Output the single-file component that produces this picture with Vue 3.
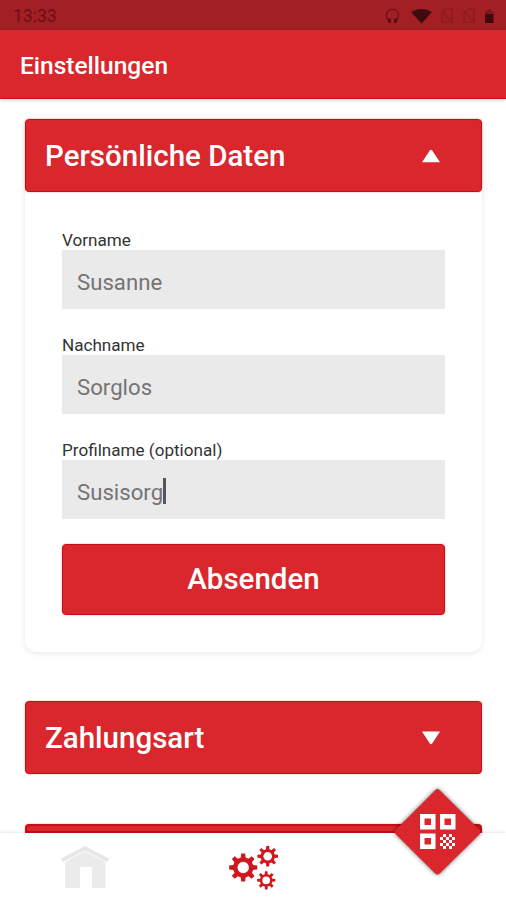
<script setup>
import { ref } from 'vue'

const fields = ref([
  { label: 'Vorname', value: 'Susanne', active: false },
  { label: 'Nachname', value: 'Sorglos', active: false },
  { label: 'Profilname (optional)', value: 'Susisorg', active: true }
])

// Closed outline of an eight-toothed gear, followed by its round hole.
function gear(cx, cy, outer, root, hole) {
  const pts = []
  for (let i = 0; i < 8; i++) {
    const a = (i * Math.PI) / 4
    const steps = [[-0.24, root], [-0.14, outer], [0.14, outer], [0.24, root]]
    for (const [d, r] of steps) {
      pts.push(`${(cx + r * Math.cos(a + d)).toFixed(2)} ${(cy + r * Math.sin(a + d)).toFixed(2)}`)
    }
  }
  return `M${pts.join('L')}ZM${cx - hole} ${cy}a${hole} ${hole} 0 1 0 ${hole * 2} 0a${hole} ${hole} 0 1 0 ${-hole * 2} 0Z`
}

const gears = [
  gear(15.2, 21.5, 14.2, 10.2, 5.7),
  gear(39.7, 10.3, 10.4, 7.2, 4.3),
  gear(38.2, 34.3, 9.2, 6.3, 3.9)
]
</script>

<template>
  <div class="screen">
    <div class="status">
      <span class="time">13:33</span>
      <svg class="status-icons" width="112" height="18" viewBox="0 0 112 18">
        <g fill="none" stroke="#74121a" stroke-width="1.5">
          <path d="M4.500 13.500C1 9 2 2.500 8.500 2.500S16 9 12.500 13.500" />
          <path d="M5.500 11.500v4.500M11.500 11.500v4.500" stroke="#5e0d14" stroke-width="3" />
        </g>
        <path d="M27 5Q37.500-1 48 5L37.500 16.500Z" fill="#400a0e" />
        <g fill="none" stroke="#901a21" stroke-width="1.500">
          <path d="M58 15V6l4-4h6v13ZM58 4l10 11" />
          <path d="M80 15V6l4-4h6v13ZM80 4l10 11" />
        </g>
        <path d="M101 4h2.500V2h3.500v2h2.500v4h-8.500Z" fill="#80151b" />
        <path d="M101 7h8.500v9H101Z" fill="#40090d" />
      </svg>
    </div>
    <header class="header">Einstellungen</header>

    <main class="content">
      <section class="card">
        <div class="bar">
          <span>Persönliche Daten</span>
          <svg width="20" height="14" viewBox="0 0 20 14"><path d="M1 13.300L8.800 1.500Q10 .2 11.200 1.500L19 13.300Z" fill="#fff" /></svg>
        </div>
        <form class="form" @submit.prevent>
          <div v-for="f in fields" :key="f.label" class="field">
            <label class="label">{{ f.label }}</label>
            <div class="input"><span>{{ f.value }}</span><i v-if="f.active" class="caret"></i></div>
          </div>
          <button class="submit" type="submit">Absenden</button>
        </form>
      </section>
      <div class="bar">
        <span>Zahlungsart</span>
        <svg width="20" height="14" viewBox="0 0 20 14"><path d="M1 .5H19L11.200 12.500Q10 13.800 8.800 12.500Z" fill="#fff" /></svg>
      </div>
      <div class="bar next"></div>
    </main>

    <nav class="nav">
      <svg class="home" width="48" height="43" viewBox="0 0 48 43">
        <path d="M0 12.500L24 0L48 12.500L46 16L24 4.500L2 16Z" fill="#e7e7e7" />
        <path d="M4 16L24 5.500L44.500 16V42H31V21H19V42H4Z" fill="#ebebeb" />
      </svg>
      <svg class="gears" width="52" height="46" viewBox="0 0 52 46">
        <path v-for="(d, i) in gears" :key="i" :d="d" fill="#d1161d" fill-rule="evenodd" />
      </svg>
    </nav>

    <svg class="fab" width="98" height="98" viewBox="0 0 98 98">
      <path d="M46.300 7.200Q48.500 5 50.700 7.200L90.500 46.800Q92.700 49 90.500 51.200L50.700 90.500Q48.500 92.700 46.300 90.500L6.800 51.200Q4.600 49 6.800 46.800Z" fill="#d9272d" />
      <path d="M31 31h15.500v15.500H31ZM35.500 35.500v6.500h6.500v-6.500ZM51 31h15.500v15.500H51ZM55.500 35.500v6.500h6.500v-6.500ZM31 50.500h15.500V66H31ZM35.500 55v6.500h6.500V55Z" fill="#fff" fill-rule="evenodd" />
      <path d="M54 51h3v3h-3ZM60 51h3v3h-3ZM51 54h3v3h-3ZM57 54h3v3h-3ZM63 54h3v3h-3ZM54 57h3v3h-3ZM60 57h3v3h-3ZM51 60h3v3h-3ZM57 60h3v3h-3ZM63 60h3v3h-3ZM54 63h3v3h-3ZM60 63h3v3h-3Z" fill="#fff" />
    </svg>
  </div>
</template>

<style>
body { margin: 0; background: #fff; }
</style>

<style scoped>
.screen {
  position: relative;
  display: flex;
  flex-direction: column;
  width: 506px;
  height: 900px;
  overflow: hidden;
  background: #fff;
  font-family: Roboto, sans-serif;
}
.status {
  display: flex;
  align-items: center;
  justify-content: space-between;
  box-sizing: border-box;
  height: 30px;
  padding: 1px 10px 0 13px;
  background: #a21f24;
  flex: none;
}
.time { font-size: 17.5px; color: #6b1016; }
.header {
  display: flex;
  align-items: center;
  box-sizing: border-box;
  height: 69px;
  padding: 2px 20px 0;
  background: #d9272d;
  border-bottom: 1px solid #c60e14;
  box-shadow: 0 1px 4px rgba(0, 0, 0, 0.18);
  color: #fff;
  font-size: 24.5px;
  font-weight: 500;
  flex: none;
}
.content {
  display: flex;
  flex-direction: column;
  flex: 1;
  min-height: 0;
  overflow: hidden;
  padding: 20px 24px 0 25px;
}
.card {
  box-sizing: border-box;
  height: 533px;
  margin-bottom: 49px;
  border-radius: 4px 4px 12px 12px;
  box-shadow: 0 1px 6px rgba(0, 0, 0, 0.1);
  flex: none;
}
.bar {
  display: flex;
  align-items: center;
  justify-content: space-between;
  box-sizing: border-box;
  height: 73px;
  padding: 0 40px 0 19px;
  background: #d9272d;
  border: 1px solid #c60e14;
  border-radius: 4px;
  box-shadow: 0 0 2px rgba(198, 14, 20, 0.4);
  color: #fff;
  font-size: 29.5px;
  font-weight: 500;
  flex: none;
}
.next {
  height: 9px;
  margin-top: 50px;
  border-width: 2px;
  border-radius: 4px 4px 0 0;
}
.form { padding: 37px 37px 0; }
.field { margin-bottom: 25px; }
.label {
  display: block;
  height: 20.6px;
  font-size: 17.1px;
  line-height: 22px;
  color: #333;
}
.input {
  display: flex;
  align-items: center;
  height: 59.4px;
  padding: 6px 15px 0;
  box-sizing: border-box;
  background: #eaeaea;
  color: #747474;
  font-size: 22.2px;
}
.caret { width: 2.5px; height: 26px; margin-top: -2px; background: #555; }
.submit {
  display: block;
  box-sizing: border-box;
  width: 100%;
  height: 71px;
  padding: 0;
  background: #d9272d;
  border: 1px solid #c60e14;
  border-radius: 4px;
  box-shadow: 0 0 2px rgba(198, 14, 20, 0.4);
  color: #fff;
  font: 500 29.5px Roboto, sans-serif;
}
.nav {
  display: flex;
  align-items: flex-start;
  box-sizing: border-box;
  height: 67px;
  padding: 12.5px 0 0 61px;
  background: #fff;
  box-shadow: 0 -1px 3px rgba(0, 0, 0, 0.1);
  flex: none;
}
.gears { margin-left: 119px; }
.fab {
  position: absolute;
  left: 389px;
  top: 783px;
  filter: drop-shadow(0 0 2px rgba(0, 0, 0, 0.6));
}
</style>
